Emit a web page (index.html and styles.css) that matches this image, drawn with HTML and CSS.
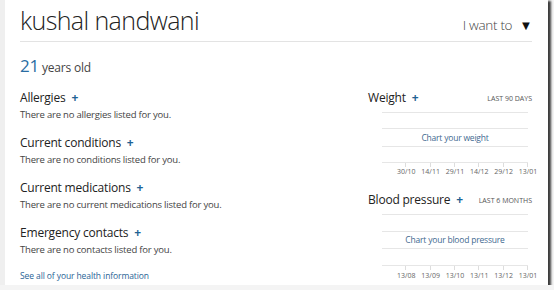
FILE: index.html
```html
<!DOCTYPE html>
<html lang="en">
<head>
    <meta charset="UTF-8">
    <title>kushal nandwani - health</title>
    <link rel="stylesheet" href="styles.css">
</head>
<body>
<div class="frame">
    <div class="header">
        <h1 class="name">kushal nandwani</h1>
        <div class="want">I want to <span class="arrow">&#9660;</span></div>
    </div>

    <div class="age"><span class="age-num">21</span> years old</div>

    <div class="columns">
        <div class="left">
            <div class="section">
                <h2>Allergies <span class="plus">+</span></h2>
                <p>There are no allergies listed for you.</p>
            </div>
            <div class="section">
                <h2>Current conditions <span class="plus">+</span></h2>
                <p>There are no conditions listed for you.</p>
            </div>
            <div class="section">
                <h2>Current medications <span class="plus">+</span></h2>
                <p>There are no current medications listed for you.</p>
            </div>
            <div class="section">
                <h2>Emergency contacts <span class="plus">+</span></h2>
                <p>There are no contacts listed for you.</p>
            </div>
            <a class="see-all" href="#">See all of your health information</a>
        </div>

        <div class="right">
            <div class="tracker">
                <div class="tracker-head">
                    <h2>Weight <span class="plus">+</span></h2>
                    <span class="range">LAST 90 DAYS</span>
                </div>
                <div class="chart">
                    <div class="band"></div>
                    <div class="band mid"><a href="#">Chart your weight</a></div>
                    <div class="band"></div>
                    <div class="axis">
                        <span class="tick"><span class="label">30/10</span></span>
                        <span class="tick"><span class="label">14/11</span></span>
                        <span class="tick"><span class="label">29/11</span></span>
                        <span class="tick"><span class="label">14/12</span></span>
                        <span class="tick"><span class="label">29/12</span></span>
                        <span class="tick"><span class="label">13/01</span></span>
                    </div>
                </div>
            </div>
            <div class="tracker">
                <div class="tracker-head">
                    <h2>Blood pressure <span class="plus">+</span></h2>
                    <span class="range">LAST 6 MONTHS</span>
                </div>
                <div class="chart even">
                    <div class="band"></div>
                    <div class="band mid"><a href="#">Chart your blood pressure</a></div>
                    <div class="band"></div>
                    <div class="axis">
                        <span class="tick"><span class="label">13/08</span></span>
                        <span class="tick"><span class="label">13/09</span></span>
                        <span class="tick"><span class="label">13/10</span></span>
                        <span class="tick"><span class="label">13/11</span></span>
                        <span class="tick"><span class="label">13/12</span></span>
                        <span class="tick"><span class="label">13/01</span></span>
                    </div>
                </div>
            </div>
        </div>
    </div>
</div>
</body>
</html>
```

FILE: styles.css
```css
* {
    box-sizing: border-box;
}

body {
    margin: 0;
    background: #f4f4f4;
    font-family: "Open Sans", sans-serif;
    color: #333;
}

.frame {
    width: 548px;
    height: 285px;
    background: #fff;
    border-left: 5px solid #efefef;
    padding: 0 16px 0 15px;
    box-shadow: 2px 2px 2px 1px rgba(0,0,0,0.75);
    overflow: hidden;
}

.header {
    display: flex;
    justify-content: space-between;
    align-items: center;
    height: 42px;
    border-bottom: 1px solid #e3e3e3;
}

.name {
    margin: 0;
    font-size: 25px;
    font-weight: 300;
    letter-spacing: -0.6px;
    color: #222;
    line-height: 34px;
    padding-bottom: 2px;
}

.want {
    font-size: 13.5px;
    font-weight: 300;
    letter-spacing: -0.3px;
    color: #444;
    padding-top: 8px;
}

.arrow {
    font-size: 13px;
    color: #111;
    margin-left: 4px;
}

.age {
    margin: 14px 0 11px;
    line-height: 20px;
    font-size: 12px;
    letter-spacing: -0.2px;
    color: #444;
}

.age-num {
    font-size: 17px;
    color: #2a6da3;
}

.columns {
    display: flex;
    justify-content: space-between;
}

h2 {
    margin: 0;
    font-size: 12px;
    font-weight: 400;
    letter-spacing: -0.2px;
    line-height: 18px;
    color: #222;
}

.plus {
    color: #1e6294;
    font-weight: 700;
    margin-left: 3px;
}

.section {
    margin-bottom: 11px;
}

.section p {
    margin: 0;
    font-size: 9.5px;
    letter-spacing: -0.2px;
    line-height: 16px;
    color: #444;
}

.see-all {
    display: block;
    font-size: 8.5px;
    letter-spacing: -0.1px;
    line-height: 14px;
    color: #2a6496;
    text-decoration: none;
}

.right {
    width: 164px;
}

.tracker {
    margin-bottom: 15px;
}

.tracker-head {
    display: flex;
    justify-content: space-between;
    align-items: center;
}

.range {
    font-size: 7px;
    color: #555;
}

.chart {
    margin: 5px 4px 0 14px;
}

.band {
    height: 16px;
    border-top: 1px solid #e6e6e6;
    text-align: center;
    font-size: 8.5px;
    letter-spacing: -0.2px;
    line-height: 17px;
}

.band.mid {
    height: 18px;
}

.chart.even .band {
    height: 17px;
    line-height: 16px;
}

.band a {
    color: #3f6a90;
    text-decoration: none;
}

.axis {
    display: flex;
    border-top: 1px solid #e6e6e6;
    height: 14px;
}

.tick {
    flex: 1;
    position: relative;
    text-align: right;
    padding-top: 5px;
    font-size: 7px;
    line-height: 8px;
}

.chart.even .tick {
    padding-top: 6px;
}

.tick::before {
    content: "";
    position: absolute;
    right: 0;
    top: 0;
    height: 4px;
    border-right: 1px solid #ddd;
}

.label {
    display: inline-block;
    vertical-align: top;
    transform: translateX(50%);
    color: #666;
}
```
